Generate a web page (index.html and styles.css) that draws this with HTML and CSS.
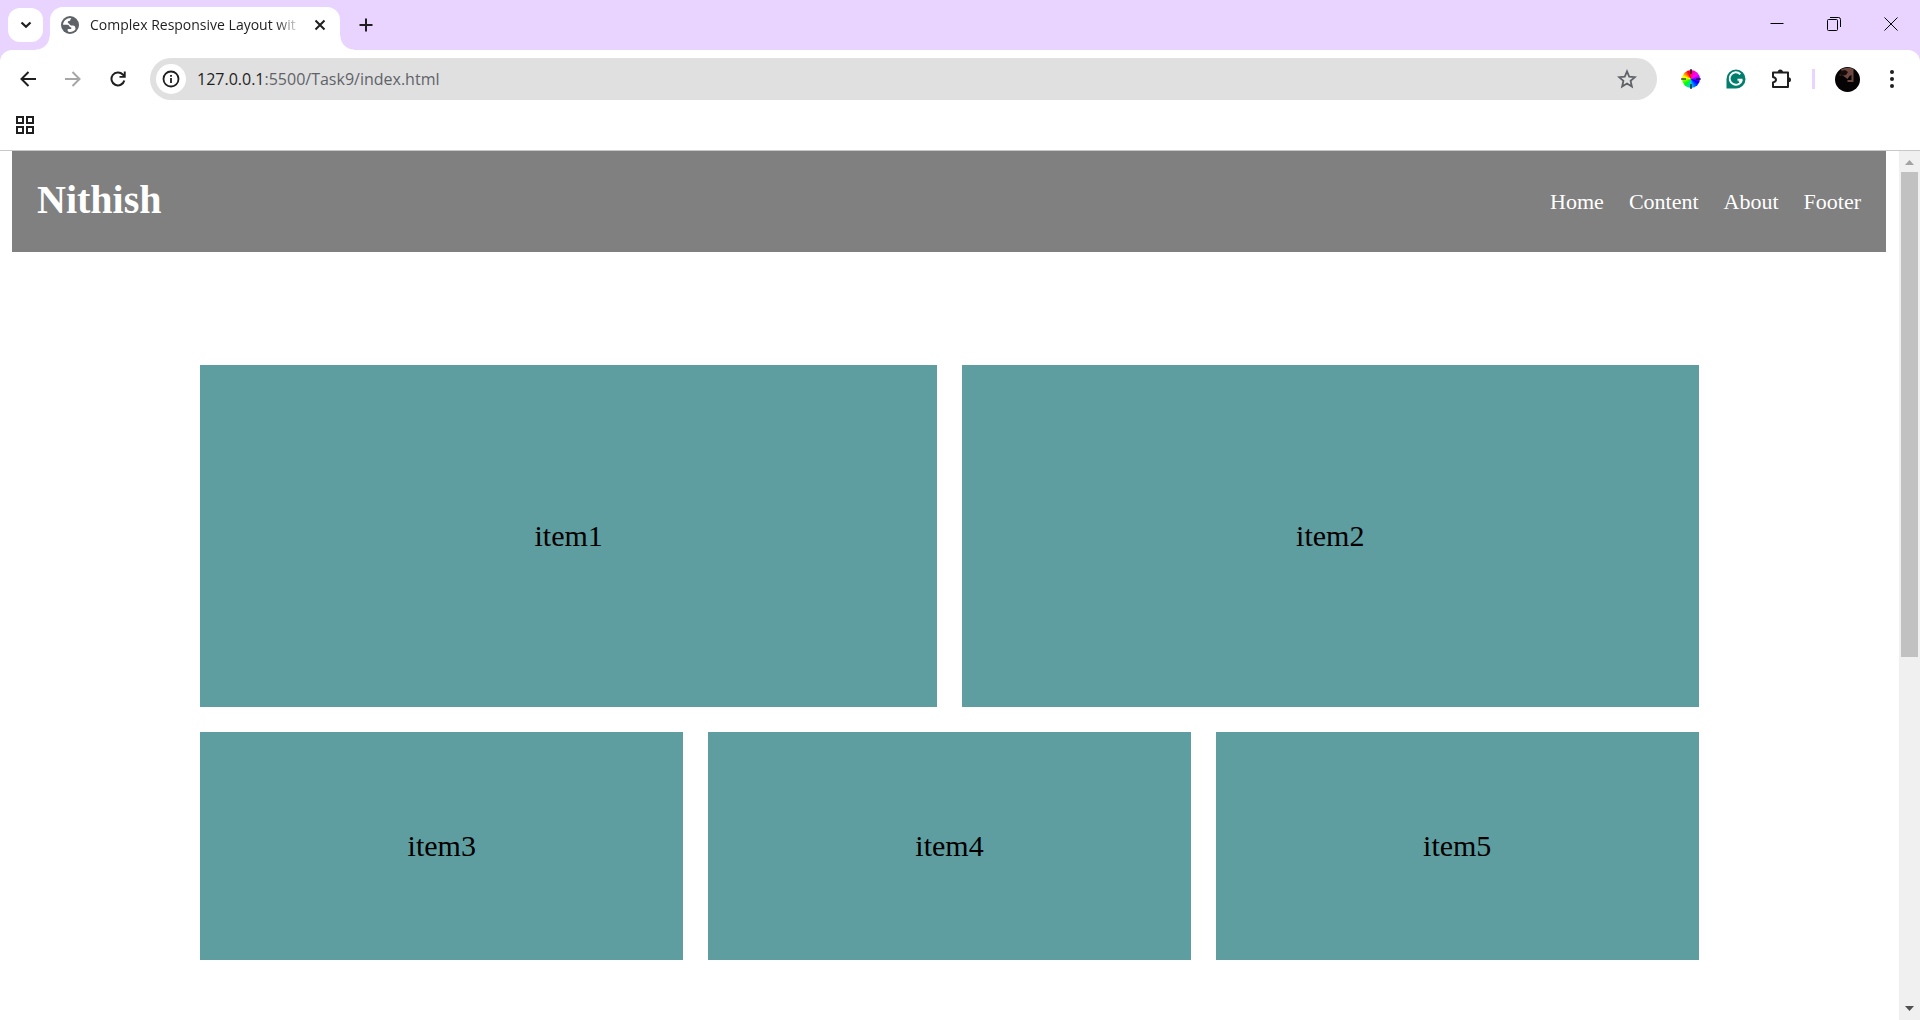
FILE: index.html
```html
<!DOCTYPE html>
<html lang="en">
<head>
<meta charset="utf-8">
<title>Complex Responsive Layout with Grid and Flexbox</title>
<link rel="stylesheet" href="styles.css">
</head>
<body>
<div class="tabstrip">
  <button class="tab-search" aria-label="Search tabs"><svg width="16" height="16" viewBox="0 0 16 16"><path d="M3.500 5.500l4.500 4.300 4.500-4.300" fill="none" stroke="#1f1f1f" stroke-width="2.2"/></svg></button>
  <div class="tab">
    <svg class="globe" width="18" height="18" viewBox="0 0 18 18"><circle cx="9" cy="9" r="9" fill="#5f6368"/><path d="M10.500 2C6 1.500 2.200 4.800 2 8.800c2 0 4.200-.2 5.200.2 1.300.5 1 2 2.300 2.200 1.100.2 1.300 1.200.4 1.700-1.300.5-3.400-.4-3.400 1 0 1.200 1 2 2.500 2.100 2.200 0 4.200-1 5.500-2.800-.2-1.400-.2-3-1.500-3.400-1.700-.4-3.600.2-4.300-1.200-.6-1.400-2-1.300-2-2.500 0-1.300 1.700-1 2.400-1.700.6-.6.300-1.700 1.400-2.400z" fill="#fff"/></svg>
    <span class="tab-title">Complex Responsive Layout wit</span>
    <button class="icon" aria-label="Close tab"><svg width="16" height="16" viewBox="0 0 16 16"><path d="M3.500 3.500l9 9M12.500 3.500l-9 9" stroke="#1f1f1f" stroke-width="2"/></svg></button>
  </div>
  <button class="icon new-tab" aria-label="New tab"><svg width="16" height="16" viewBox="0 0 16 16"><path d="M8 1.500v13M1.500 8h13" stroke="#1f1f1f" stroke-width="2"/></svg></button>
  <div class="window-controls">
    <button class="icon" aria-label="Minimize"><svg width="14" height="14" viewBox="0 0 14 14"><path d="M.5 6.500h13" stroke="#000"/></svg></button>
    <button class="icon" aria-label="Restore"><svg width="14" height="14" viewBox="0 0 14 14"><rect x=".5" y="2.500" width="10" height="11" rx="1" fill="none" stroke="#000"/><path d="M3 .5h8.500a2 2 0 0 1 2 2V10" fill="none" stroke="#000"/></svg></button>
    <button class="icon" aria-label="Close"><svg width="14" height="14" viewBox="0 0 14 14"><path d="M.5.5l13 13M13.500.5l-13 13" stroke="#000"/></svg></button>
  </div>
</div>

<div class="toolbar">
  <button class="icon" aria-label="Back"><svg width="16" height="16" viewBox="0 0 16 16"><path d="M16 8H2M8.500 1L1.500 8l7 7" fill="none" stroke="#1f1f1f" stroke-width="2"/></svg></button>
  <button class="icon" aria-label="Forward"><svg width="16" height="16" viewBox="0 0 16 16"><path d="M0 8h14M7.500 1l7 7-7 7" fill="none" stroke="#a6a6a6" stroke-width="2"/></svg></button>
  <button class="icon" aria-label="Reload"><svg width="16" height="16" viewBox="0 0 16 16"><path d="M14.300 9.500A6.500 6.500 0 1 1 12.800 3.500l1.700 1.800" fill="none" stroke="#1f1f1f" stroke-width="2"/><path d="M9.500 6.800V5h4.300V0.500h1.900v6.300z" fill="#1f1f1f"/></svg></button>
  <div class="address">
    <button class="site-info" aria-label="Site information"><svg width="18" height="18" viewBox="0 0 18 18"><circle cx="9" cy="9" r="7.500" fill="none" stroke="#1f1f1f" stroke-width="1.800"/><path d="M9 8v5M9 5v1.800" stroke="#1f1f1f" stroke-width="1.800"/></svg></button>
    <a class="url" href="#"><span class="host">127.0.0.1</span>:5500/Task9/index.html</a>
    <button class="icon" aria-label="Bookmark this page"><svg width="20" height="20" viewBox="0 0 20 20"><path d="M10 2.400l2.200 5.300 5.700.5-4.300 3.700 1.300 5.600L10 14.500l-4.900 3 1.300-5.600-4.300-3.700 5.700-.5z" fill="none" stroke="#5f6368" stroke-width="1.800"/></svg></button>
  </div>
  <div class="extensions">
    <button class="icon" aria-label="Color picker"><svg width="20" height="20" viewBox="0 0 20 20"><foreignObject x="1" y="1" width="18" height="18"><div class="wheel"></div></foreignObject><path d="M10 0v5M10 15v5M0 10h5M15 10h5" stroke="#000" stroke-width="1.200"/></svg></button>
    <button class="icon" aria-label="Grammarly"><svg width="20" height="20" viewBox="0 0 20 20"><path d="M10 .5A9.500 9.500 0 0 0 .5 10v9.500H10A9.500 9.500 0 0 0 10 .5z" fill="#037e6d"/><path d="M14.300 5.200A6.200 6.200 0 1 0 15.900 11M16.500 10.700h-5M13.200 13.500l2.600-2.600" fill="none" stroke="#fff" stroke-width="2"/></svg></button>
    <button class="icon" aria-label="Extensions"><svg width="20" height="20" viewBox="0 0 20 20"><path d="M2 3.500h15v14.500H2v-4.500c2-.5 3-1.400 3-2.700S4 8.500 2 8z" fill="none" stroke="#1f1f1f" stroke-width="2" stroke-linejoin="round"/><path d="M6.700 3a2.600 2.600 0 0 1 5.200 0zM17.500 8.300a2.500 2.500 0 0 1 0 5z" fill="#1f1f1f"/></svg></button>
  </div>
  <span class="divider"></span>
  <button class="icon profile" aria-label="Profile"><svg width="25" height="25" viewBox="0 0 25 25"><circle cx="12.500" cy="12.500" r="12.500" fill="#050303"/><path d="M6 2.500Q12-.5 18.500 2v13h-6v-2h4V8l-2 1-2 3-4-3-5-1 4-1z" fill="#6e4840"/><path d="M5 4l5-1 3 2-2 3-5 1z" fill="#160c0a"/></svg></button>
  <button class="icon" aria-label="Menu"><svg width="6" height="20" viewBox="0 0 6 20"><g fill="#1f1f1f"><circle cx="3" cy="3" r="2"/><circle cx="3" cy="10" r="2"/><circle cx="3" cy="17" r="2"/></g></svg></button>
</div>

<div class="bookmarks">
  <button class="icon" aria-label="Apps"><svg width="18" height="18" viewBox="0 0 18 18"><path d="M1 1h6v6H1zM11 1h6v6h-6zM1 11h6v6H1zM11 11h6v6h-6z" fill="none" stroke="#1f1f1f" stroke-width="2"/></svg></button>
</div>

<div class="viewport">
  <div class="page">
    <header class="site-header">
      <h1>Nithish</h1>
      <nav><a href="#">Home</a><a href="#">Content</a><a href="#">About</a><a href="#">Footer</a></nav>
    </header>
    <main class="grid">
      <div class="item wide">item1</div>
      <div class="item wide">item2</div>
      <div class="item">item3</div>
      <div class="item">item4</div>
      <div class="item">item5</div>
    </main>
  </div>
  <div class="scrollbar">
    <svg width="21" height="21" viewBox="0 0 21 21"><path d="M6 14l4.500-5 4.500 5z" fill="#a3a3a3"/></svg>
    <div class="track"><div class="thumb"></div></div>
    <svg width="21" height="21" viewBox="0 0 21 21"><path d="M6 7l4.500 5L15 7z" fill="#505050"/></svg>
  </div>
</div>
</body>
</html>
```
FILE: styles.css
```css
* { box-sizing: border-box; }
body {
  margin: 0;
  min-height: 100vh;
  display: flex;
  flex-direction: column;
  background: #fff;
  font-family: "Liberation Serif", "Times New Roman", serif;
}
button { border: 0; padding: 0; background: none; }
.icon { display: flex; align-items: center; justify-content: center; flex: none; }
svg { display: block; flex: none; }

/* browser frame */
.tabstrip, .toolbar { font-family: "Segoe UI", "Open Sans", sans-serif; }
.tabstrip { display: flex; height: 50px; padding-left: 8px; background: #e9d4ff; }
.tab-search {
  width: 35px; height: 34px; margin-top: 8px;
  display: flex; align-items: center; justify-content: center;
  border-radius: 12px; background: #fff;
}
.tab {
  position: relative;
  width: 290px; margin: 7px 0 0 7px; padding: 0 12px 7px 11px;
  display: flex; align-items: center; gap: 11px;
  border-radius: 13px 13px 0 0; background: #fff;
}
.tab::before, .tab::after {
  content: ""; position: absolute; bottom: 0; width: 14px; height: 14px;
}
.tab::before { right: 100%; background: radial-gradient(circle at 0 0, transparent 13px, #fff 14px); }
.tab::after { left: 100%; background: radial-gradient(circle at 100% 0, transparent 13px, #fff 14px); }
.tab-title {
  flex: 1; overflow: hidden; white-space: nowrap;
  font-size: 14px; line-height: 20px; color: #1f1f1f;
  mask-image: linear-gradient(to right, #000 88%, transparent);
}
.new-tab { margin-left: 18px; }
.window-controls { display: flex; gap: 43px; margin-left: auto; padding: 0 22px 2px 0; }
.toolbar {
  display: flex; align-items: center; height: 58px; padding: 0 25px 0 20px; gap: 29px;
  background: linear-gradient(#e9d4ff, #e9d4ff) 0 0 / 100% 12px no-repeat, #fff;
  position: relative; isolation: isolate;
}
.toolbar::before {
  content: ""; position: absolute; inset: 0; z-index: -1;
  border-radius: 12px 12px 0 0; background: #fff;
}
.address {
  flex: 1; height: 42px; margin: 0 -5px; padding: 0 20px 0 6px;
  display: flex; align-items: center;
  border-radius: 21px; background: #e0e0e0;
}
.site-info {
  width: 30px; height: 30px; flex: none;
  display: flex; align-items: center; justify-content: center;
  border-radius: 50%; background: #fff;
}
.url { flex: 1; margin-left: 11px; font-size: 16px; line-height: 24px; color: #5f6368; text-decoration: none; }
.host { color: #1f1f1f; }
.extensions { display: flex; gap: 25px; }
.wheel {
  width: 18px; height: 18px; border-radius: 50%;
  background: conic-gradient(#f08, #f0f 15%, #00f 33%, #0cf 50%, #0f0 64%, #ff0 80%, #f00 94%, #f08);
}
.divider { width: 3px; height: 20px; margin: 0 -9px 0 -8px; background: #e9d4ff; }
.bookmarks { display: flex; height: 43px; padding: 0 0 8px 16px; border-bottom: 1px solid #c8c8c8; }

/* page content */
.viewport { flex: 1; display: flex; }
.page { flex: 1; padding: 0 13px 60px 12px; }
.site-header {
  display: flex; align-items: center; justify-content: space-between;
  padding: 26px 25px 30px; background: #808080; color: #fff;
}
h1 { margin: 0; font-size: 40px; line-height: 45px; }
nav { display: flex; gap: 25px; padding-top: 5px; }
nav a { color: #fff; font-size: 22px; line-height: 26px; text-decoration: none; }
.grid {
  width: 80%; margin: 113px auto 0; padding-left: 1px;
  display: grid; grid-template-columns: repeat(6, 1fr);
  grid-template-rows: 342px 228px; gap: 25px;
}
.item {
  grid-column: span 2;
  display: flex; align-items: center; justify-content: center;
  background: #5f9ea0; color: #000; font-size: 30px;
}
.wide { grid-column: span 3; }
.scrollbar { width: 21px; display: flex; flex-direction: column; background: #f0f0f0; }
.track { flex: 1; padding: 0 2px; }
.thumb { height: 485px; background: #c1c1c1; }
```
